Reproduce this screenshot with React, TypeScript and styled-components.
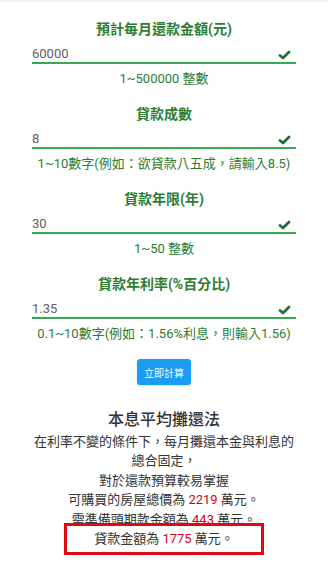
import styled, { createGlobalStyle } from 'styled-components';

const GlobalStyle = createGlobalStyle`
  html, body {
    margin: 0;
    padding: 0;
    background: #fff;
  }
  body {
    font-family: Roboto, "Noto Sans CJK TC", "Noto Sans", sans-serif;
    -webkit-font-smoothing: antialiased;
  }
`;

const TopStrip = styled.div`
  height: 2px;
  background: #f2f2f2;
`;

const Page = styled.div`
  width: 264px;
  margin: 0 auto;
  padding-top: 17px;
  padding-bottom: 20px;
`;

const Field = styled.div`
  margin-bottom: 15px;
`;

const Label = styled.div`
  font-size: 14px;
  font-weight: 700;
  line-height: 20px;
  color: #2e7d32;
  text-align: center;
  margin-bottom: 5px;
`;

const InputRow = styled.div`
  display: flex;
  align-items: center;
  border-bottom: 2px solid #34a853;
`;

const Input = styled.input`
  flex: 1;
  min-width: 0;
  height: 18px;
  padding: 0;
  border: none;
  outline: none;
  background: transparent;
  font-family: inherit;
  font-size: 13px;
  color: #616161;
`;

const CheckIcon = styled.svg`
  width: 13px;
  height: 10px;
  margin-right: 5px;
  margin-top: 4px;
  fill: none;
  stroke: #1f6f3a;
  stroke-width: 2.8;
  stroke-linecap: round;
  stroke-linejoin: round;
`;

const Helper = styled.div`
  font-size: 13px;
  line-height: 20px;
  color: #2e7d32;
  text-align: center;
  margin-top: 5px;
`;

const ButtonRow = styled.div`
  display: flex;
  justify-content: center;
`;

const Button = styled.button`
  width: 54px;
  height: 26px;
  padding: 0;
  border: none;
  border-radius: 3px;
  background: #1a9cf2;
  color: #fff;
  font-family: inherit;
  font-size: 10px;
  box-shadow: 0 1px 2px rgba(0, 0, 0, 0.15);
`;

const Result = styled.div`
  margin-top: 23px;
  text-align: center;
  color: #333;
`;

const Title = styled.div`
  font-size: 16px;
  font-weight: 500;
  line-height: 24px;
`;

const Text = styled.div`
  font-size: 13px;
  line-height: 19.4px;
`;

const Num = styled.span`
  color: #d0021b;
`;

const Boxed = styled.span`
  border: 3px solid #e30613;
  padding: 5px 27px 6px;
`;

const Check = () => (
  <CheckIcon viewBox="0 0 13 10">
    <polyline points="2,5.5 5,8 11,2" />
  </CheckIcon>
);

const fields = [
  { label: '預計每月還款金額(元)', value: '60000', hint: '1~500000 整數' },
  { label: '貸款成數', value: '8', hint: '1~10數字(例如：欲貸款八五成，請輸入8.5)' },
  { label: '貸款年限(年)', value: '30', hint: '1~50 整數' },
  { label: '貸款年利率(%百分比)', value: '1.35', hint: '0.1~10數字(例如：1.56%利息，則輸入1.56)' },
];

const App = () => {
  return (
    <>
      <GlobalStyle />
      <TopStrip />
      <Page>
        {fields.map((f) => (
          <Field key={f.label}>
            <Label>{f.label}</Label>
            <InputRow>
              <Input defaultValue={f.value} />
              <Check />
            </InputRow>
            <Helper>{f.hint}</Helper>
          </Field>
        ))}
        <ButtonRow>
          <Button type="button">立即計算</Button>
        </ButtonRow>
        <Result>
          <Title>本息平均攤還法</Title>
          <Text>
            在利率不變的條件下，每月攤還本金與利息的<br />
            總合固定，<br />
            對於還款預算較易掌握<br />
            可購買的房屋總價為 <Num>2219</Num> 萬元。<br />
            需準備頭期款金額為 <Num>443</Num> 萬元。<br />
            <Boxed>貸款金額為 <Num>1775</Num> 萬元。</Boxed>
          </Text>
        </Result>
      </Page>
    </>
  );
};

export default App;
